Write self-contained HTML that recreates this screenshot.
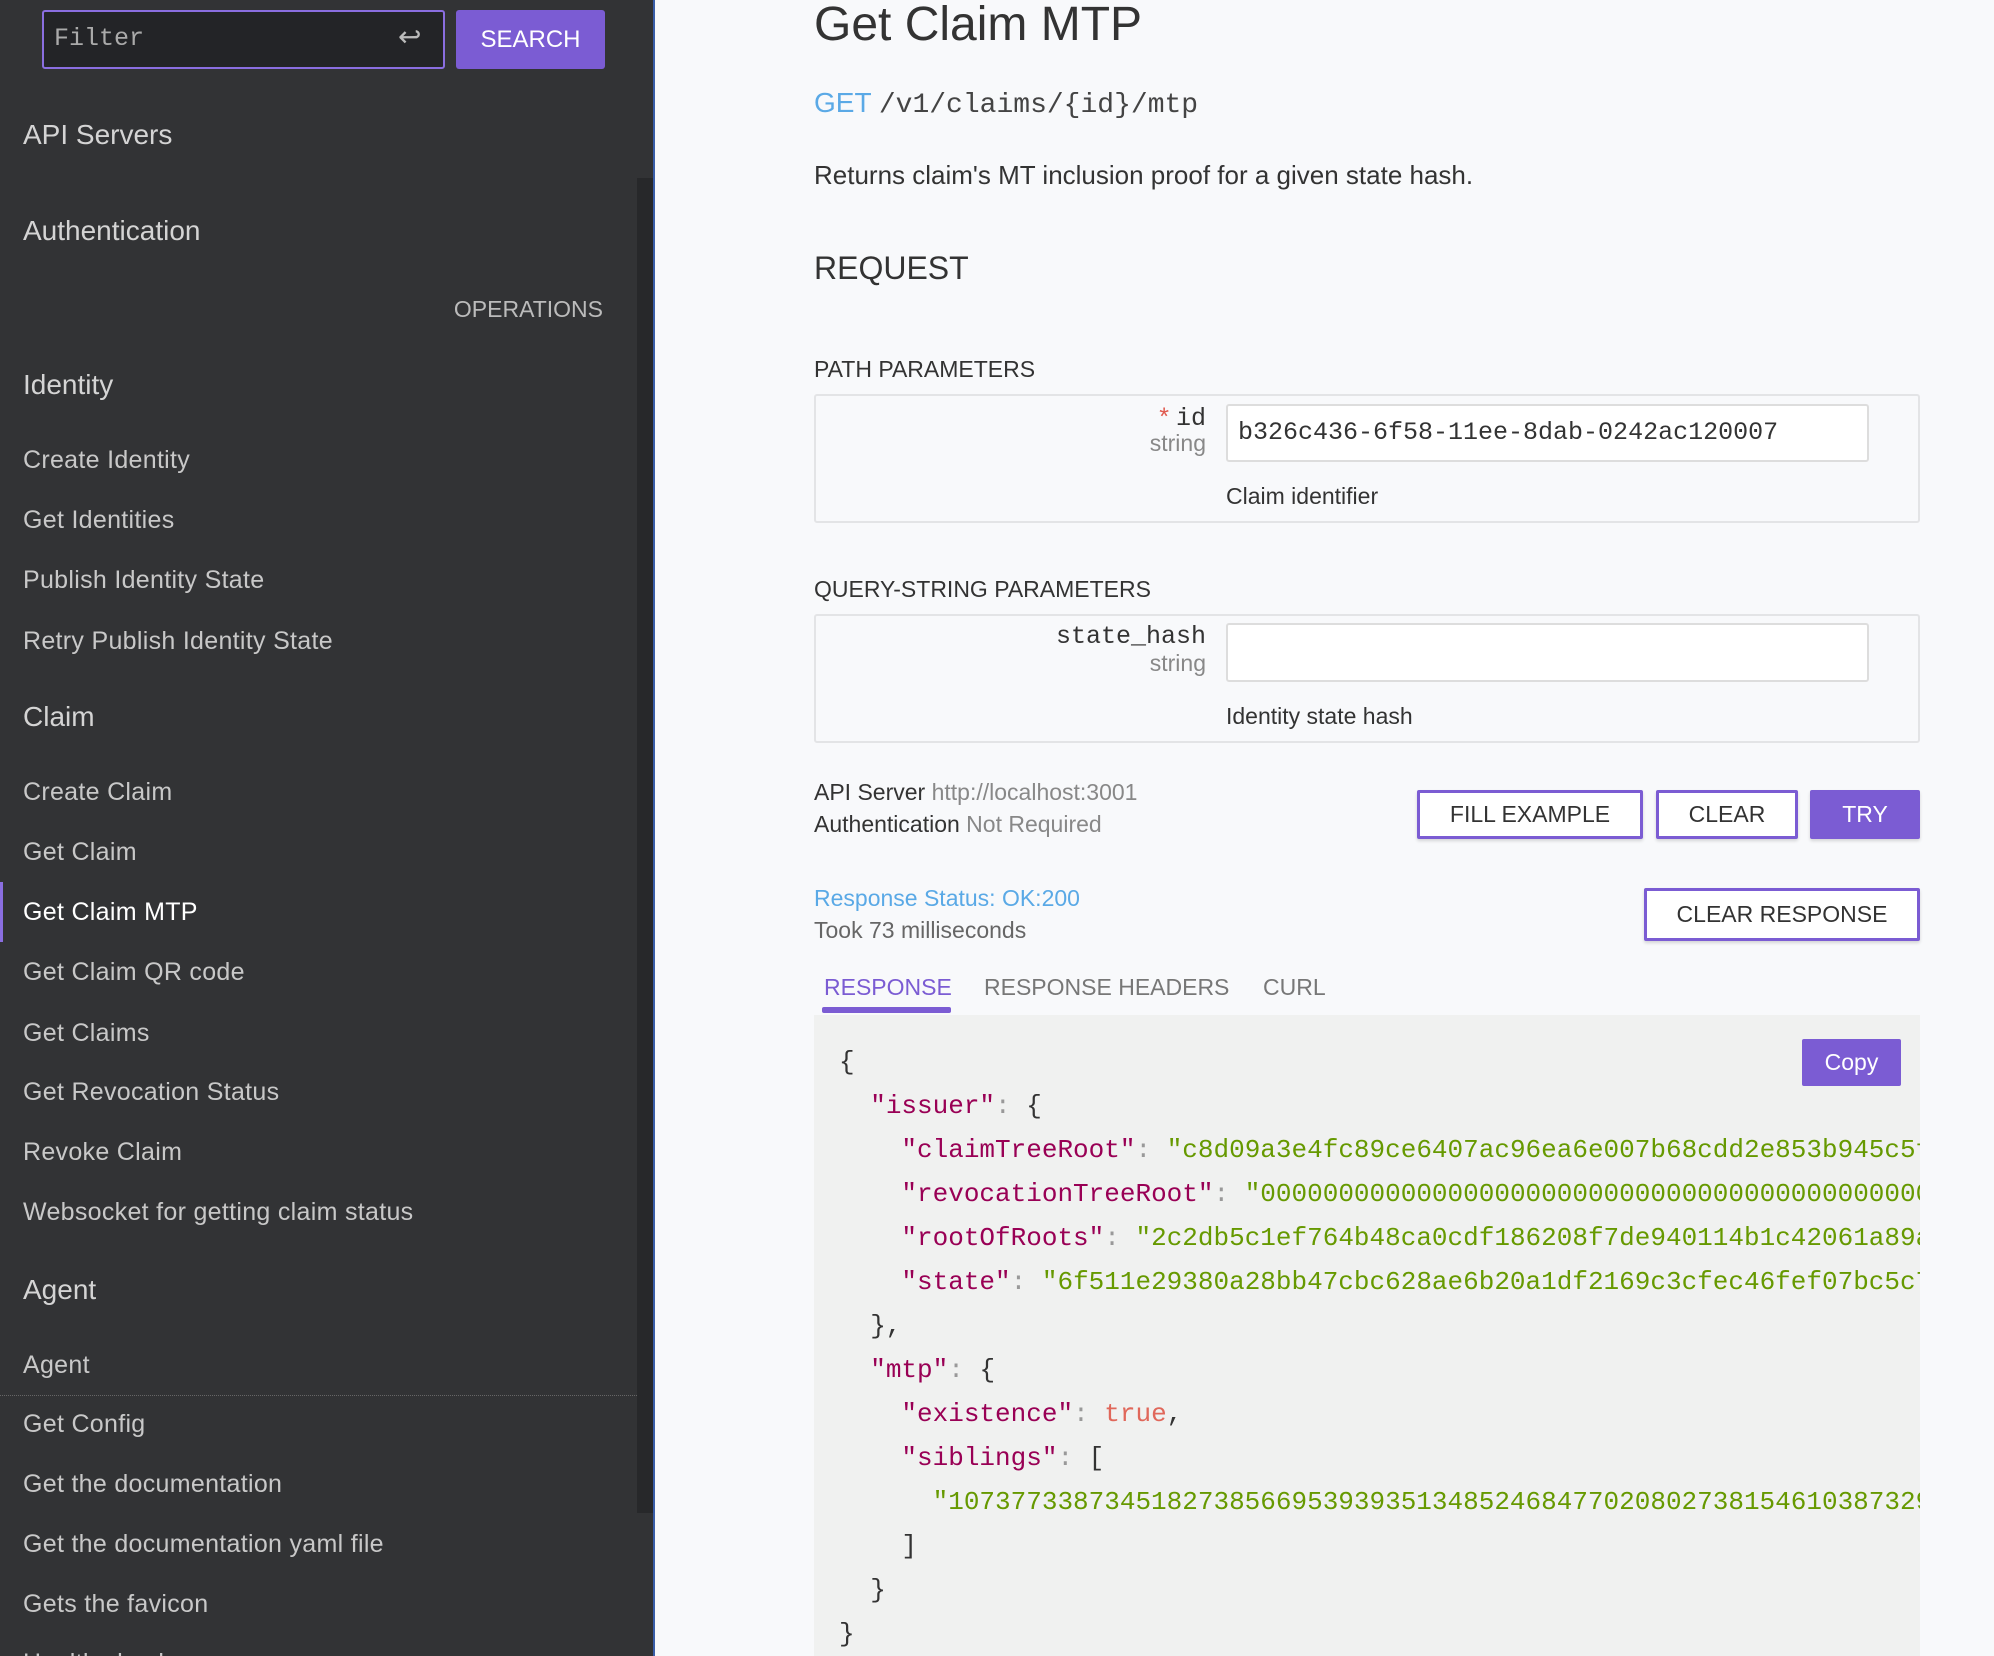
<!DOCTYPE html>
<html><head><meta charset="utf-8"><style>
*{margin:0;padding:0;box-sizing:border-box}
html{width:1994px;height:1656px;overflow:hidden}
body{width:1994px;height:1656px;overflow:hidden;background:#f8f9fb;font-family:"Liberation Sans",sans-serif;position:relative}
.a{position:absolute;white-space:nowrap}
#sb{position:absolute;left:0;top:0;width:655px;height:1656px;background:#323335;border-right:2px solid #3a5ea8;overflow:hidden}
.s{position:absolute;left:23px;color:#c8c8c8;font-size:25px;line-height:30px;letter-spacing:.3px}
.h{position:absolute;left:23px;color:#d4d4d4;font-size:28px;line-height:34px}
.m{font-family:"Liberation Mono",monospace}
.btn{position:absolute;border:3px solid #7b5cd3;background:#fff;color:#333;font-size:23px;display:flex;align-items:center;justify-content:center;border-radius:2px;box-shadow:0 2px 3px rgba(0,0,0,.15)}
.code{font-family:"Liberation Mono",monospace;font-size:26px;line-height:44px;position:absolute;color:#333}
.code div{white-space:pre}
.k{color:#990055}.st{color:#669900}.p{color:#999}.b{color:#e0675a}
</style></head><body>
<div id="sb">
<div class="a" style="left:42px;top:10px;width:403px;height:59px;background:#232427;border:2px solid #8a6ee0;border-radius:3px"></div>
<div class="a m" style="left:54px;top:24px;font-size:25px;color:#aaa">Filter</div>
<div class="a" style="left:398px;top:20px;font-size:28px;color:#bbb">↩</div>
<div class="a" style="left:456px;top:10px;width:149px;height:59px;background:#7b5cd3;border-radius:3px;color:#fff;font-size:24px;display:flex;align-items:center;justify-content:center">SEARCH</div>
<div class="a" style="left:637px;top:178px;width:16px;height:1335px;background:#27282a"></div>
<div class="h" style="top:118px">API Servers</div>
<div class="h" style="top:214px">Authentication</div>
<div class="a" style="right:50px;top:296px;color:#bbb;font-size:23px">OPERATIONS</div>
<div class="h" style="top:368px">Identity</div>
<div class="s" style="top:445px">Create Identity</div>
<div class="s" style="top:505px">Get Identities</div>
<div class="s" style="top:565px">Publish Identity State</div>
<div class="s" style="top:626px">Retry Publish Identity State</div>
<div class="h" style="top:700px">Claim</div>
<div class="s" style="top:777px">Create Claim</div>
<div class="s" style="top:837px">Get Claim</div>
<div class="a" style="left:0;top:882px;width:3px;height:60px;background:#8a6ee0"></div>
<div class="s" style="top:897px;color:#fff">Get Claim MTP</div>
<div class="s" style="top:957px">Get Claim QR code</div>
<div class="s" style="top:1018px">Get Claims</div>
<div class="s" style="top:1077px">Get Revocation Status</div>
<div class="s" style="top:1137px">Revoke Claim</div>
<div class="s" style="top:1197px">Websocket for getting claim status</div>
<div class="h" style="top:1273px">Agent</div>
<div class="s" style="top:1350px">Agent</div>
<div class="a" style="left:0;top:1395px;width:637px;border-top:1px dotted #666"></div>
<div class="s" style="top:1409px">Get Config</div>
<div class="s" style="top:1469px">Get the documentation</div>
<div class="s" style="top:1529px">Get the documentation yaml file</div>
<div class="s" style="top:1589px">Gets the favicon</div>
<div class="s" style="top:1648px">Health check</div>
</div>

<div class="a" style="left:814px;top:-4px;font-size:48px;color:#333;line-height:58px">Get Claim MTP</div>
<div class="a" style="left:814px;top:87px;font-size:28px;line-height:32px"><span style="color:#5aa9e6">GET</span> <span class="m" style="color:#444">/v1/claims/{id}/mtp</span></div>
<div class="a" style="left:814px;top:160px;font-size:26px;color:#333">Returns claim's MT inclusion proof for a given state hash.</div>
<div class="a" style="left:814px;top:250px;font-size:32px;color:#333">REQUEST</div>
<div class="a" style="left:814px;top:356px;font-size:23px;color:#333">PATH PARAMETERS</div>
<div class="a" style="left:814px;top:394px;width:1106px;height:129px;border:2px solid #e3e4e6;border-radius:3px"></div>
<div class="a" style="right:788px;top:403px;font-size:25px;color:#333;text-align:right"><span style="color:#e05a4f">*</span> <span class="m">id</span></div>
<div class="a" style="right:788px;top:430px;font-size:23px;color:#888">string</div>
<div class="a" style="left:1226px;top:404px;width:643px;height:58px;background:#fff;border:2px solid #ddd;border-radius:3px"></div>
<div class="a m" style="left:1238px;top:418px;font-size:25px;color:#333">b326c436-6f58-11ee-8dab-0242ac120007</div>
<div class="a" style="left:1226px;top:483px;font-size:23px;color:#333">Claim identifier</div>
<div class="a" style="left:814px;top:576px;font-size:23px;color:#333">QUERY-STRING PARAMETERS</div>
<div class="a" style="left:814px;top:614px;width:1106px;height:129px;border:2px solid #e3e4e6;border-radius:3px"></div>
<div class="a m" style="right:788px;top:622px;font-size:25px;color:#333">state_hash</div>
<div class="a" style="right:788px;top:650px;font-size:23px;color:#888">string</div>
<div class="a" style="left:1226px;top:623px;width:643px;height:59px;background:#fff;border:2px solid #ddd;border-radius:3px"></div>
<div class="a" style="left:1226px;top:703px;font-size:23px;color:#333">Identity state hash</div>
<div class="a" style="left:814px;top:779px;font-size:23px;color:#333">API Server <span style="color:#888">http://localhost:3001</span></div>
<div class="a" style="left:814px;top:811px;font-size:23px;color:#333">Authentication <span style="color:#888">Not Required</span></div>
<div class="btn" style="left:1417px;top:790px;width:226px;height:49px">FILL EXAMPLE</div>
<div class="btn" style="left:1656px;top:790px;width:142px;height:49px">CLEAR</div>
<div class="btn" style="left:1810px;top:790px;width:110px;height:49px;background:#7b5cd3;color:#fff">TRY</div>
<div class="a" style="left:814px;top:885px;font-size:23px;color:#5aa9e6">Response Status: OK:200</div>
<div class="a" style="left:814px;top:917px;font-size:23px;color:#666">Took 73 milliseconds</div>
<div class="btn" style="left:1644px;top:888px;width:276px;height:53px">CLEAR RESPONSE</div>
<div class="a" style="left:824px;top:974px;font-size:23px;color:#7b5cd3">RESPONSE</div>
<div class="a" style="left:822px;top:1007px;width:129px;height:6px;background:#7b5cd3;border-radius:2px"></div>
<div class="a" style="left:984px;top:974px;font-size:23px;color:#777">RESPONSE HEADERS</div>
<div class="a" style="left:1263px;top:974px;font-size:23px;color:#777">CURL</div>
<div class="a" style="left:814px;top:1015px;width:1106px;height:641px;background:#f0f1f0;overflow:hidden">
<div class="code" style="left:25px;top:25px">
<div>{</div>
<div>  <span class="k">"issuer"</span><span class="p">:</span> {</div>
<div>    <span class="k">"claimTreeRoot"</span><span class="p">:</span> <span class="st">"c8d09a3e4fc89ce6407ac96ea6e007b68cdd2e853b945c5f1a2b3c"</span></div>
<div>    <span class="k">"revocationTreeRoot"</span><span class="p">:</span> <span class="st">"0000000000000000000000000000000000000000000000"</span></div>
<div>    <span class="k">"rootOfRoots"</span><span class="p">:</span> <span class="st">"2c2db5c1ef764b48ca0cdf186208f7de940114b1c42061a89a1b2c"</span></div>
<div>    <span class="k">"state"</span><span class="p">:</span> <span class="st">"6f511e29380a28bb47cbc628ae6b20a1df2169c3cfec46fef07bc5c7a1"</span></div>
<div>  },</div>
<div>  <span class="k">"mtp"</span><span class="p">:</span> {</div>
<div>    <span class="k">"existence"</span><span class="p">:</span> <span class="b">true</span>,</div>
<div>    <span class="k">"siblings"</span><span class="p">:</span> [</div>
<div>      <span class="st">"10737733873451827385669539393513485246847702080273815461038732931"</span></div>
<div>    ]</div>
<div>  }</div>
<div>}</div>
</div>
<div class="a" style="left:988px;top:24px;width:99px;height:47px;background:#7b5cd3;color:#fff;font-size:23px;display:flex;align-items:center;justify-content:center;border-radius:2px">Copy</div>
</div>
</body></html>
